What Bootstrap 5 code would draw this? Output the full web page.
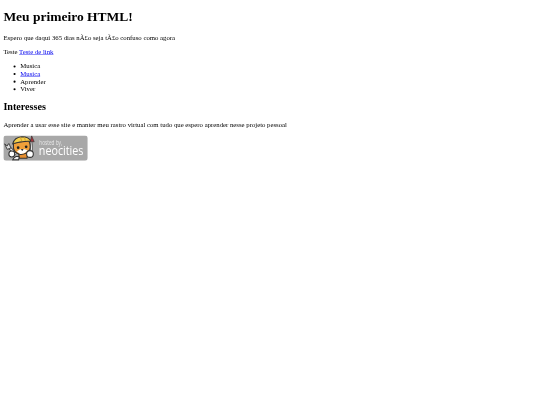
<!doctype html>
<html lang="pt">
<head>
<meta charset="utf-8">
<title>Meu primeiro HTML!</title>
<link rel="stylesheet" href="https://cdn.jsdelivr.net/npm/bootstrap@5.3.0/dist/css/bootstrap.min.css">
<style>
html, body { background: #fff; }
body { margin: 0; color: #000; font-family: "Liberation Serif", serif; font-size: 16px; line-height: normal; }
.moldura { width: 540px; height: 405px; overflow: hidden; }
.pagina { width: 700px; transform: scale(0.421875); transform-origin: 0 0; padding: 21.44px 8px 0; filter: blur(0.6px); }
.pagina h1, .pagina h2 { font-family: "Liberation Serif", serif; font-weight: 700; line-height: normal; }
.pagina h1 { font-size: 32px; margin: 0 0 21.44px; }
.pagina h2 { font-size: 24px; margin: 19.92px 0; }
.pagina p { margin: 0 0 16px; }
.pagina ul { margin: 0 0 16px; padding-left: 40px; list-style: disc; }
.pagina a { color: #0000ee; text-decoration: underline; }
.selo { display: block; width: 200px; height: 60px; }
</style>
</head>
<body>
<div class="moldura">
<div class="pagina">
  <h1>Meu primeiro HTML!</h1>
  <p>Espero que daqui 365 dias nÃ£o seja tÃ£o confuso como agora</p>
  <p>Teste <a href="#">Teste de link</a></p>
  <ul>
    <li>Musica</li>
    <li><a href="#">Musica</a></li>
    <li>Aprender</li>
    <li>Viver</li>
  </ul>
  <h2>Interesses</h2>
  <p>Aprender a usar esse site e manter meu rastro virtual com tudo que espero aprender nesse projeto pessoal</p>
  <a href="#" class="selo">
    <svg width="200" height="60" viewBox="0 0 200 60" xmlns="http://www.w3.org/2000/svg">
      <rect width="200" height="60" rx="7" fill="#a8a8a8"/>
      <path d="M8 24 L14 29 L30 44" stroke="#333" stroke-width="7" fill="none"/>
      <path d="M8 24 L14 29 L30 44" stroke="#ddd" stroke-width="3.500" fill="none"/>
      <path d="M3 20 L9 25 L13 19 L18 30 L9 33Z" fill="#ddd" stroke="#333" stroke-width="2"/>
      <circle cx="20" cy="44" r="7" fill="#fff" stroke="#333" stroke-width="2.500"/>
      <path d="M30 50 Q24 52 22 58 L36 58 L38 50Z" fill="#eee" stroke="#333" stroke-width="2.500"/>
      <path d="M36 42 L58 42 L56 54 L38 54Z" fill="#e88f2e" stroke="#333" stroke-width="2.500"/>
      <path d="M24 18 L60 12 Q66 24 62 34 Q54 46 40 45 Q26 42 24 30Z" fill="#f0a03a" stroke="#333" stroke-width="2.500"/>
      <path d="M32 38 Q44 28 58 36 Q50 45 40 44Z" fill="#fff"/>
      <circle cx="35" cy="29" r="3.200" fill="#222"/><circle cx="54" cy="27" r="3.200" fill="#222"/>
      <path d="M41 33 L48 32 L45 37Z" fill="#222"/>
      <path d="M22 20 Q26 4 44 3 Q60 3 66 14 Q44 12 22 20Z" fill="#f5cf4b" stroke="#333" stroke-width="2.500"/>
      <path d="M40 4 L44 14 M50 4 L52 13" stroke="#c9962c" stroke-width="2"/>
      <path d="M66 40 L68 12" stroke="#333" stroke-width="5"/>
      <path d="M66 40 L68 12" stroke="#e8e8e8" stroke-width="2.500"/>
      <path d="M64 15 L67 1 L73 15Z" fill="#a8323a" stroke="#333" stroke-width="1.500"/>
      <circle cx="63" cy="44" r="8" fill="#fff" stroke="#333" stroke-width="2.500"/>
      <g transform="translate(85 22) scale(.75 1)"><text font-family="Open Sans, sans-serif" font-size="15" fill="#e6e6e6">hosted by,</text></g>
      <g transform="translate(84 47) scale(.91 1)"><text font-family="Open Sans, sans-serif" font-size="28" fill="#fff">neocities</text></g>
    </svg>
  </a>
</div>
</div>
</body>
</html>
